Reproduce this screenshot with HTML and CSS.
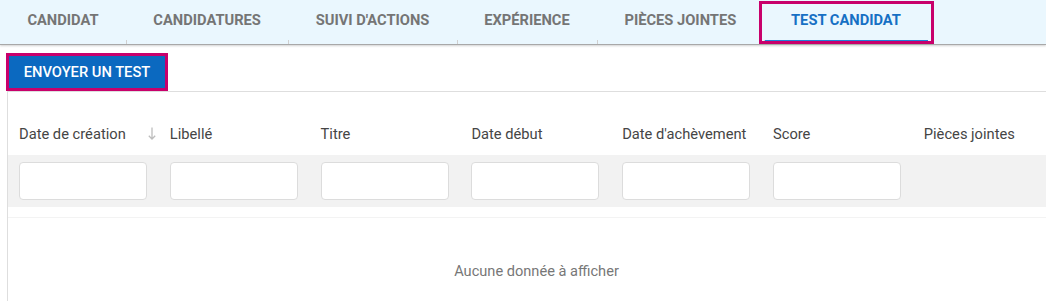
FILE: index.html
```html
<!DOCTYPE html>
<html lang="fr">
<head>
    <meta charset="UTF-8">
    <meta name="viewport" content="width=device-width, initial-scale=1.0">
    <title>Test candidat</title>
    <link rel="stylesheet" href="styles.css">
</head>
<body>
    <nav class="tabs">
        <a class="tab">Candidat</a>
        <a class="tab">Candidatures</a>
        <a class="tab">Suivi d'actions</a>
        <a class="tab">Expérience</a>
        <a class="tab">Pièces jointes</a>
        <a class="tab active">Test candidat</a>
    </nav>

    <div class="toolbar">
        <button class="btn-primary">ENVOYER UN TEST</button>
    </div>

    <div class="grid">
        <div class="grid-row header-row">
            <div class="cell sorted">Date de création
                <svg class="sort-icon" width="8" height="13" viewBox="0 0 8 13">
                    <path d="M4 0.5V12M0.8 8.8L4 12L7.2 8.8" fill="none" stroke="#bdbdbd" stroke-width="1.3"/>
                </svg>
            </div>
            <div class="cell">Libellé</div>
            <div class="cell">Titre</div>
            <div class="cell">Date début</div>
            <div class="cell">Date d'achèvement</div>
            <div class="cell">Score</div>
            <div class="cell">Pièces jointes</div>
        </div>
        <div class="grid-row filter-row">
            <div class="cell"><input class="filter" type="text"></div>
            <div class="cell"><input class="filter" type="text"></div>
            <div class="cell"><input class="filter" type="text"></div>
            <div class="cell"><input class="filter" type="text"></div>
            <div class="cell"><input class="filter" type="text"></div>
            <div class="cell"><input class="filter" type="text"></div>
            <div class="cell"></div>
        </div>
        <div class="spacer-row"></div>
        <div class="no-data">Aucune donnée à afficher</div>
    </div>
</body>
</html>
```

FILE: styles.css
```css
* {
    margin: 0;
    padding: 0;
    box-sizing: border-box;
    font-family: Roboto, "Liberation Sans", Arial, sans-serif;
}

body {
    background: white;
    overflow: hidden;
}

.tabs {
    display: flex;
    height: 45px;
    background-color: #eaf7fe;
    border-bottom: 1px solid #a8a8a8;
    box-shadow: 0 1px 2px rgba(0, 0, 0, 0.18);
}

.tab {
    position: relative;
    display: flex;
    align-items: center;
    height: 40px;
    padding: 0 27.4px;
    font-size: 14.7px;
    font-weight: 700;
    text-transform: uppercase;
    color: #757575;
    cursor: pointer;
}

.tab + .tab::before {
    content: "";
    position: absolute;
    left: 0;
    bottom: -4px;
    width: 1px;
    height: 4px;
    background: #d0d0d0;
}

.tab.active {
    color: #1670c4;
    box-shadow: 0 4px 0 #1f80d8;
}

/* focus frame */
.tab.active::after {
    content: "";
    position: absolute;
    left: -5px;
    right: -6px;
    top: 1px;
    height: 37px;
    border: 3px solid #c8006b;
}

.toolbar {
    padding: 8px 0 0 6px;
}

.btn-primary {
    height: 38px;
    width: 162px;
    background-color: #0b69c0;
    border: 3px solid #c8006b;
    color: white;
    font-size: 14.7px;
    font-weight: 500;
}

.grid {
    margin-left: 7px;
    border-left: 1px solid #dedede;
    border-top: 1px solid #dedede;
    overflow: hidden;
    height: 210px;
}

.grid-row {
    display: grid;
    grid-template-columns: repeat(7, 150.8px);
}

.cell {
    padding: 0 11px;
}

.header-row {
    height: 63px;
    align-items: end;
    padding-bottom: 12px;
}

.header-row .cell {
    font-size: 14.7px;
    color: #454545;
    white-space: nowrap;
    position: relative;
}

.sort-icon {
    position: absolute;
    right: 3px;
    top: 2px;
}

.filter-row {
    height: 52px;
    align-items: center;
    background-color: #f2f2f2;
}

.filter {
    display: block;
    width: 128px;
    height: 38px;
    border: 1px solid #dcdcdc;
    border-radius: 4px;
    background: white;
}

.spacer-row {
    height: 11px;
    border-bottom: 1px solid #f3f3f3;
}

.no-data {
    text-align: center;
    padding-top: 44px;
    font-size: 14.6px;
    color: #777;
    width: 1057px;
}
```
